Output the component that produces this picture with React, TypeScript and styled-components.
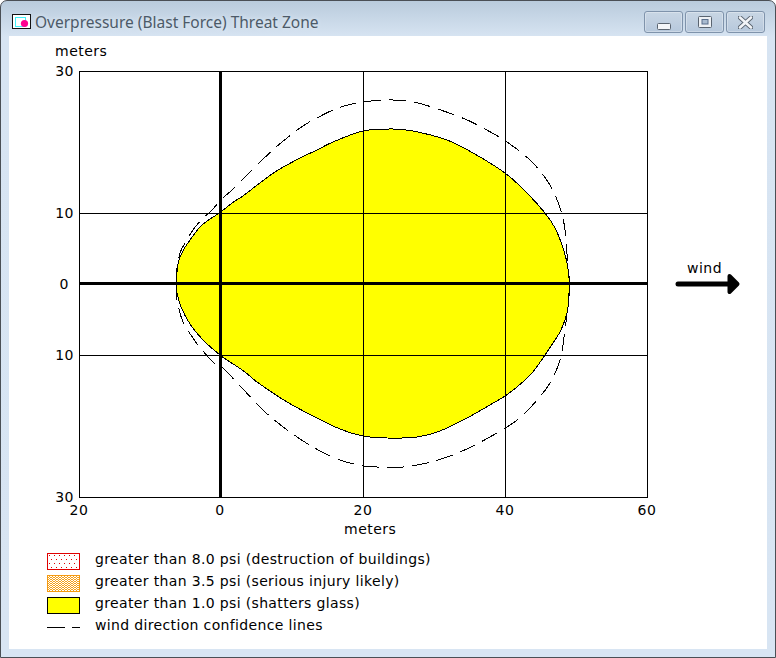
import React from "react";
import styled, { createGlobalStyle } from "styled-components";

const Global = createGlobalStyle`
  html, body { margin: 0; padding: 0; background: #fff; }
`;

const Win = styled.div`
  box-sizing: border-box;
  width: 776px;
  height: 658px;
  display: flex;
  flex-direction: column;
  border: 1px solid #4a4f55;
  border-radius: 7px 7px 0 0;
  background: linear-gradient(to bottom, #b9cbdc 0, #d7e4f2 36px, #d8e5f3 100%);
  overflow: hidden;
`;

const TitleBar = styled.div`
  height: 35px;
  flex: none;
  display: flex;
  align-items: flex-start;
  padding: 10px 10px 0 11px;
  box-sizing: border-box;
`;

const AppIcon = styled.svg`
  width: 19px;
  height: 16px;
  margin-top: 2px;
  flex: none;
`;

const Title = styled.div`
  margin-left: 4px;
  font: 15.5px/22px "Noto Sans", sans-serif;
  color: #4c5a68;
  text-shadow: 0 0 4px #e4eef8;
  flex: 1;
  white-space: nowrap;
`;

const Buttons = styled.div`
  display: flex;
  gap: 2px;
`;

const WinButton = styled.div`
  box-sizing: border-box;
  width: 39px;
  height: 22px;
  border: 1px solid #7f93ab;
  border-radius: 3px;
  display: flex;
  align-items: center;
  justify-content: center;
  background: linear-gradient(to bottom, #c8d6e4, #c0cfe0 50%, #b6c8dc);
  box-shadow: inset 0 0 0 1px rgba(255, 255, 255, 0.3);
`;

const Client = styled.div`
  flex: 1;
  margin: 0 8px 8px 8px;
  background: #fff;
  display: flex;
  flex-direction: column;
  min-height: 0;
`;

const Chart = styled.svg`
  display: block;
  width: 758px;
  height: 509px;
  flex: none;
`;

const Label = styled.text`
  font: 14px "DejaVu Sans", Verdana, sans-serif;
  letter-spacing: 0.5px;
  fill: #000;
`;

const Legend = styled.div`
  display: flex;
  flex-direction: column;
  gap: 5px;
  padding: 8px 0 0 38px;
`;

const LegendRow = styled.div`
  display: flex;
  align-items: center;
  height: 17px;
`;

const Swatch = styled.svg`
  width: 33px;
  height: 17px;
  flex: none;
  display: block;
`;

const LegendText = styled.span`
  margin: -5px 0 0 15px;
  font: 14px/17px "DejaVu Sans", Verdana, sans-serif;
  letter-spacing: 0.35px;
  color: #000;
  white-space: nowrap;
`;

type P = [number, number];

function smooth(pts: P[]): string {
  let d = `M${pts[0][0]} ${pts[0][1]}`;
  for (let i = 0; i < pts.length - 1; i++) {
    const p0 = pts[Math.max(0, i - 1)];
    const p1 = pts[i];
    const p2 = pts[i + 1];
    const p3 = pts[Math.min(pts.length - 1, i + 2)];
    const c1x = p1[0] + (p2[0] - p0[0]) / 6;
    const c1y = p1[1] + (p2[1] - p0[1]) / 6;
    const c2x = p2[0] - (p3[0] - p1[0]) / 6;
    const c2y = p2[1] - (p3[1] - p1[1]) / 6;
    d += ` C${c1x.toFixed(1)} ${c1y.toFixed(1)} ${c2x.toFixed(1)} ${c2y.toFixed(1)} ${p2[0]} ${p2[1]}`;
  }
  return d;
}

const threat: P[] = [
  [176.5, 283], [177, 272], [179, 260], [184, 249], [190, 240], [202, 225], [220, 212.5], [232, 203], [243, 196], [252, 189],
  [275, 172], [300, 158], [317, 150], [333, 142], [363, 131], [393, 129], [413, 131], [447, 140], [473, 153],
  [505, 173], [527, 193], [545, 213], [555, 228], [562, 245], [567, 263], [569.5, 283], [569, 296], [567, 313], [561, 330],
  [553, 343], [545, 355], [532, 373], [517, 387], [505, 396], [483, 409], [467, 418], [440, 431], [417, 437],
  [387, 438], [363, 436], [340, 429], [317, 418], [287, 402], [257, 382], [245, 372], [227, 360], [220, 355],
  [203, 340], [190, 324], [181, 307], [177, 293], [176.5, 283],
];

const upperConf: P[] = [
  [176.5, 283], [177, 268], [180, 253], [185, 243], [193, 230], [202, 219], [210, 212], [223, 198], [232, 190],
  [250, 172], [275, 148], [300, 128], [315, 119], [338, 108], [363, 102], [393, 100], [418, 103], [460, 117],
  [483, 128], [507, 142], [532, 162], [550, 185], [560, 208], [565, 230], [568, 267], [570, 283],
];

const lowerConf: P[] = [
  [176.5, 283], [177, 300], [183, 322], [193, 338], [198, 345], [213, 362], [223, 368], [242, 388], [265, 412],
  [290, 432], [313, 447], [337, 459], [363, 466], [377, 467], [403, 467], [427, 463], [450, 456], [475, 445],
  [507, 427], [523, 415], [537, 400], [550, 383], [560, 360], [565, 330], [568, 303], [570, 283],
];

const yLabels: [string, number, number][] = [
  ["30", 74, 76],
  ["10", 74, 218],
  ["0", 69, 289],
  ["10", 74, 360],
  ["30", 74, 502],
];

const xLabels: [string, number][] = [
  ["20", 79],
  ["0", 220],
  ["20", 363],
  ["40", 505],
  ["60", 647],
];

const Frame = ({ color, fill }: { color: string; fill: string }) => (
  <rect x="0.5" y="0.5" width="32" height="16" fill={fill} stroke={color} shapeRendering="crispEdges" />
);

export default function App() {
  return (
    <>
      <Global />
      <Win>
        <TitleBar>
          <AppIcon viewBox="0 0 19 16">
            <rect x="0.5" y="1.5" width="18" height="14" fill="#fff" stroke="#111" />
            <rect x="3.5" y="4.5" width="10" height="9" fill="none" stroke="#40f0f8" />
            <circle cx="12.5" cy="10.5" r="3.6" fill="#ff0090" />
          </AppIcon>
          <Title>Overpressure (Blast Force) Threat Zone</Title>
          <Buttons>
            <WinButton>
              <svg width="14" height="8" viewBox="0 0 14 8" style={{ marginTop: 9 }}>
                <rect x="0.5" y="0.5" width="13" height="6" rx="1" fill="#f4f6f9" stroke="#5a6470" />
              </svg>
            </WinButton>
            <WinButton>
              <svg width="14" height="12" viewBox="0 0 14 12">
                <rect x="0.5" y="0.5" width="13" height="11" rx="1" fill="#eef1f5" stroke="#5a6470" />
                <rect x="4" y="3.5" width="6" height="4.5" fill="#a9bbd0" stroke="#5a6f8c" />
              </svg>
            </WinButton>
            <WinButton>
              <svg width="15" height="13" viewBox="0 0 15 13">
                <path d="M2 1.5 L13 11.5 M13 1.5 L2 11.5" stroke="#5a6470" strokeWidth="4.4" strokeLinecap="round" />
                <path d="M2 1.5 L13 11.5 M13 1.5 L2 11.5" stroke="#f2f4f7" strokeWidth="2.6" strokeLinecap="round" />
              </svg>
            </WinButton>
          </Buttons>
        </TitleBar>
        <Client>
          <Chart viewBox="9 36 758 509">
            <path d={smooth(threat) + " Z"} fill="#ffff00" stroke="#000" strokeWidth="1" shapeRendering="crispEdges" />
            <g stroke="#000" strokeWidth="1" shapeRendering="crispEdges">
              <line x1="363.5" y1="71" x2="363.5" y2="497" />
              <line x1="505.5" y1="71" x2="505.5" y2="497" />
              <line x1="79" y1="213.5" x2="647" y2="213.5" />
              <line x1="79" y1="355.5" x2="647" y2="355.5" />
            </g>
            <g stroke="#000" strokeWidth="3" shapeRendering="crispEdges">
              <line x1="220" y1="71" x2="220" y2="497" />
              <line x1="79" y1="283.5" x2="647" y2="283.5" />
            </g>
            <g fill="none" stroke="#000" strokeWidth="1" strokeDasharray="17 8" shapeRendering="crispEdges">
              <path d={smooth(upperConf)} />
              <path d={smooth(lowerConf)} />
            </g>
            <rect x="79.5" y="71.5" width="568" height="426" fill="none" stroke="#000" shapeRendering="crispEdges" />
            <Label x="55" y="56">meters</Label>
            {yLabels.map(([t, x, y], i) => (
              <Label key={i} x={x} y={y} textAnchor="end">{t}</Label>
            ))}
            {xLabels.map(([t, x], i) => (
              <Label key={i} x={x} y={515} textAnchor="middle">{t}</Label>
            ))}
            <Label x="344" y="534">meters</Label>
            <Label x="687" y="273">wind</Label>
            <path d="M678 284 H732" stroke="#000" strokeWidth="5" strokeLinecap="round" />
            <path d="M729.5 276 L737.5 284 L729.5 292 Z" fill="#000" stroke="#000" strokeWidth="4" strokeLinejoin="round" />
          </Chart>
          <Legend>
            <LegendRow>
              <Swatch viewBox="0 0 33 17">
                <defs>
                  <pattern id="dotsHigh" width="10" height="8" patternUnits="userSpaceOnUse">
                    <rect x="2" y="2" width="1" height="1" fill="#e00000" />
                    <rect x="7" y="2" width="1" height="1" fill="#e00000" />
                    <rect x="4" y="6" width="1" height="1" fill="#e00000" />
                    <rect x="9" y="6" width="1" height="1" fill="#e00000" />
                  </pattern>
                </defs>
                <Frame color="#e00000" fill="url(#dotsHigh)" />
              </Swatch>
              <LegendText>greater than 8.0 psi (destruction of buildings)</LegendText>
            </LegendRow>
            <LegendRow>
              <Swatch viewBox="0 0 33 17">
                <defs>
                  <pattern id="dotsMid" width="3" height="2" patternUnits="userSpaceOnUse">
                    <rect width="3" height="2" fill="#fff" />
                    <rect x="0" y="0" width="2" height="1" fill="#f7a21b" />
                    <rect x="2" y="1" width="1" height="1" fill="#f7a21b" />
                  </pattern>
                </defs>
                <Frame color="#f59a10" fill="url(#dotsMid)" />
              </Swatch>
              <LegendText>greater than 3.5 psi (serious injury likely)</LegendText>
            </LegendRow>
            <LegendRow>
              <Swatch viewBox="0 0 33 17">
                <Frame color="#000" fill="#ffff00" />
              </Swatch>
              <LegendText>greater than 1.0 psi (shatters glass)</LegendText>
            </LegendRow>
            <LegendRow>
              <Swatch viewBox="0 0 33 17">
                <path d="M0 8.5 H18 M25 8.5 H33" stroke="#000" strokeWidth="1" shapeRendering="crispEdges" />
              </Swatch>
              <LegendText>wind direction confidence lines</LegendText>
            </LegendRow>
          </Legend>
        </Client>
      </Win>
    </>
  );
}
